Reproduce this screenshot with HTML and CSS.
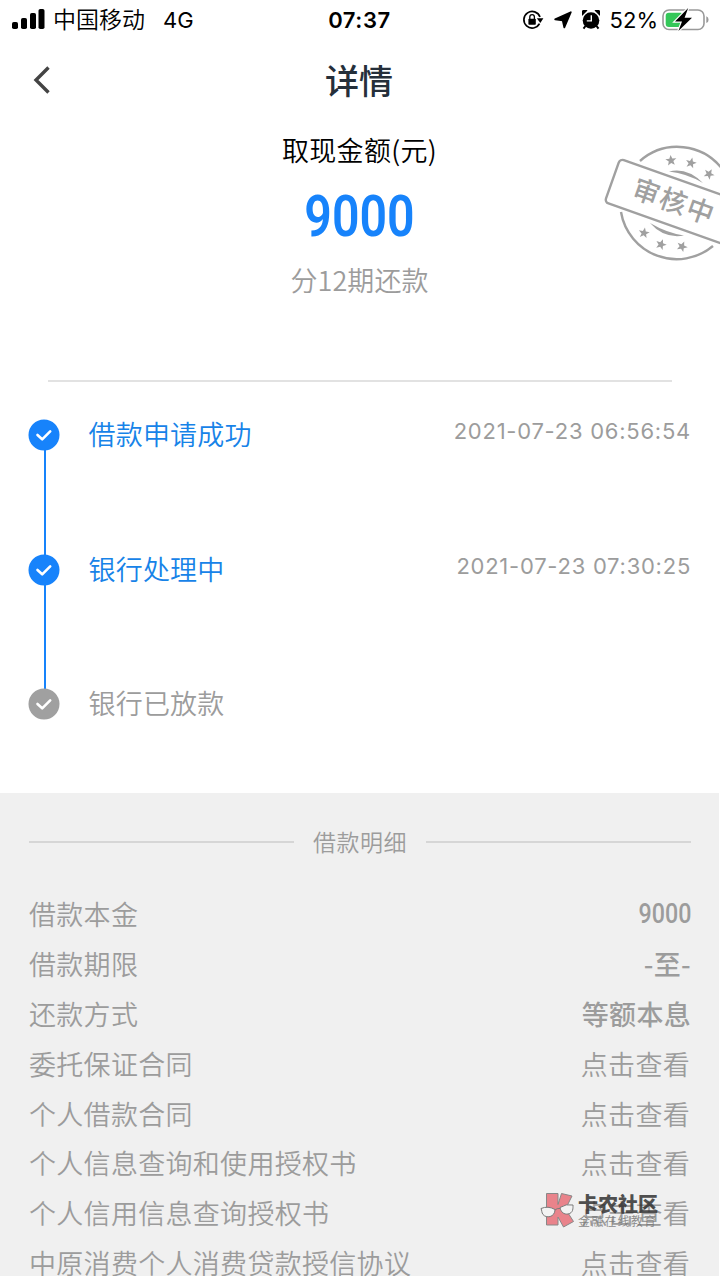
FILE: index.html
```html
<!DOCTYPE html>
<html lang="zh-CN">
<head>
    <meta charset="UTF-8">
    <meta name="viewport" content="width=device-width, initial-scale=1.0">
    <title>详情</title>
    <link rel="stylesheet" href="styles.css">
</head>
<body>
    <div class="status-bar">
        <div class="status-left">
            <svg class="signal" width="33" height="22" viewBox="0 0 33 22">
                <rect x="0" y="13" width="6" height="7" rx="1.8"/>
                <rect x="9" y="9" width="6" height="11" rx="1.8"/>
                <rect x="18" y="4" width="6" height="16" rx="1.8"/>
                <rect x="26.5" y="0" width="6" height="20" rx="1.8"/>
            </svg>
            <span class="carrier">中国移动</span>
            <span class="network">4G</span>
        </div>
        <div class="status-time">07:37</div>
        <div class="status-right">
            <svg class="lock" width="22" height="22" viewBox="0 0 22 22">
                <path d="M17.5 14.7A8.3 8.3 0 1 1 18 8" fill="none" stroke="#000" stroke-width="1.7"/>
                <path d="M14.8 9.3h6.6l-3.1 4.8z"/>
                <rect x="6.4" y="9.7" width="7.4" height="6" rx="0.8"/>
                <path d="M7.8 10V8a2.3 2.3 0 0 1 4.6 0v2" fill="none" stroke="#000" stroke-width="1.3"/>
            </svg>
            <svg class="location" width="18" height="18" viewBox="0 0 18 18">
                <path d="M16.8 1.2L10.3 16.3 8.700 9.300 1.200 8.300z" stroke="#000" stroke-width="1.8" stroke-linejoin="round"/>
            </svg>
            <svg class="alarm" width="18" height="20" viewBox="0 0 18 20">
                <circle cx="9" cy="10.5" r="8.3"/>
                <path d="M.3 5.8A3.3 3.3 0 0 1 5.5 .6zM17.7 5.8A3.3 3.3 0 0 0 12.5 .6z"/>
                <path d="M3.5 16l-2 2.6M14.5 16l2 2.6" stroke="#000" stroke-width="2"/>
                <path d="M9.3 5.3v5.6H4.8" fill="none" stroke="#fff" stroke-width="1.4"/>
            </svg>
            <span class="percent">52%</span>
            <svg class="battery" width="47" height="26" viewBox="0 0 47 26">
                <rect x="1" y="3" width="41" height="19.5" rx="6" fill="none" stroke="#999" stroke-width="1.6"/>
                <path d="M44.3 9.3q2.3 .8 2.3 3.4t-2.3 3.4z" fill="#999"/>
                <rect x="3.7" y="5.7" width="18" height="14.2" rx="3.2" fill="#34c759"/>
                <path d="M26.2 1L13 14.6h7L16.4 24 30 10.8h-7.4z" stroke="#fff" stroke-width="2.4" paint-order="stroke"/>
            </svg>
        </div>
    </div>

    <header class="nav">
        <svg class="back" width="18" height="28" viewBox="0 0 18 28">
            <path d="M15.5 1.5L3 14l12.5 12.5" fill="none" stroke="#444" stroke-width="3.4"/>
        </svg>
        <h1>详情</h1>
    </header>

    <section class="summary">
        <div class="summary-label">取现金额(元)</div>
        <div class="amount">9000</div>
        <div class="periods">分12期还款</div>
        <svg class="stamp" width="130" height="140" viewBox="0 0 130 140">
            <defs>
                <path id="star" d="M0-5.6L1.5-1.8 5.5-1.7 2.3.8 3.4 4.6 0 2.4-3.4 4.6-2.3.8-5.5-1.7-1.5-1.8z"/>
            </defs>
            <g fill="none" stroke="#a0a0a0" stroke-width="2.4">
                <path d="M50 31A56.5 56.5 0 0 1 133 40"/>
                <path d="M31 82A56.5 56.5 0 0 0 123 116"/>
                <rect x="-67.5" y="-23" width="150" height="46" rx="4" transform="translate(86 73) rotate(19.5)"/>
            </g>
            <g fill="#a0a0a0">
                <path d="M79 41.5Q97 37 113 53Q97 43.5 79 41.5z"/>
                <path d="M60 93Q74 109 94 105.5Q77 103 60 93z"/>
                <use href="#star" transform="translate(81 30.5) rotate(-5)"/>
                <use href="#star" transform="translate(101 33) rotate(14)"/>
                <use href="#star" transform="translate(119 44) rotate(30)"/>
                <use href="#star" transform="translate(54 103) rotate(10)"/>
                <use href="#star" transform="translate(71 114.5) rotate(20)"/>
                <use href="#star" transform="translate(92 116.5) rotate(24)"/>
                <text class="stamp-text" x="-46" y="9.5" transform="translate(87 73) rotate(19.5)">审核中</text>
            </g>
        </svg>
    </section>

    <ul class="steps">
        <li class="step done">
            <svg class="dot" width="32" height="32" viewBox="0 0 32 32">
                <circle cx="16" cy="16" r="15.5"/>
                <path d="M9.5 16l4.7 4.3 8-8"/>
            </svg>
            <span class="step-name">借款申请成功</span>
            <span class="step-time">2021-07-23 06:56:54</span>
        </li>
        <li class="step done">
            <svg class="dot" width="32" height="32" viewBox="0 0 32 32">
                <circle cx="16" cy="16" r="15.5"/>
                <path d="M9.5 16l4.7 4.3 8-8"/>
            </svg>
            <span class="step-name">银行处理中</span>
            <span class="step-time">2021-07-23 07:30:25</span>
        </li>
        <li class="step">
            <svg class="dot" width="32" height="32" viewBox="0 0 32 32">
                <circle cx="16" cy="16" r="15.5"/>
                <path d="M9.5 16l4.7 4.3 8-8"/>
            </svg>
            <span class="step-name">银行已放款</span>
        </li>
    </ul>

    <section class="details">
        <h2>借款明细</h2>
        <div class="row"><span>借款本金</span><span class="value number">9000</span></div>
        <div class="row"><span>借款期限</span><span class="value">-至-</span></div>
        <div class="row"><span>还款方式</span><span class="value">等额本息</span></div>
        <div class="row"><span>委托保证合同</span><span class="link">点击查看</span></div>
        <div class="row"><span>个人借款合同</span><span class="link">点击查看</span></div>
        <div class="row"><span>个人信息查询和使用授权书</span><span class="link">点击查看</span></div>
        <div class="row"><span>个人信用信息查询授权书</span><span class="link">点击查看</span></div>
        <div class="row"><span>中原消费个人消费贷款授信协议</span><span class="link">点击查看</span></div>
    </section>

    <div class="watermark">
        <svg width="36" height="36" viewBox="0 0 36 36">
            <path d="M6.5 1.500h11.5v11L21.500 1.500l10.500 2.500-6.500 13 8 12.500-10 5.500-5.500-10v8H6.500z" fill="#e8707a" stroke="#777"/>
            <g fill="#f4f4f4" stroke="#666">
                <path d="M1 16.500q7-3 14 1c0 8-9 9-12 5-1.500-2-1-4-2-6z"/>
                <path d="M20 15.500q6-4 13-2.500c0 3 .5 8-5 9-4 .5-7-1.500-8-6.500z"/>
                <path d="M15 18q2-2 5-1.500" fill="none"/>
            </g>
        </svg>
        <div class="watermark-text">
            <b>卡农社区</b>
            <span>金融在线教育</span>
        </div>
    </div>
</body>
</html>
```

FILE: styles.css
```css
* {
    box-sizing: border-box;
}
body {
    position: relative;
    width: 720px;
    height: 1280px;
    margin: 0;
    overflow: hidden;
    background-color: #fff;
    color: #9c9c9c;
    font-family: "Noto Sans CJK SC", sans-serif;
    font-size: 27px;
    font-weight: 350;
}

/* status bar */
.status-bar {
    display: grid;
    grid-template-columns: 1fr auto 1fr;
    align-items: center;
    height: 40px;
    padding: 0 11px 0 12px;
    color: #000;
    font-family: Inter, "Noto Sans CJK SC", sans-serif;
    font-size: 22px;
    font-weight: 400;
}
.status-left,
.status-right {
    display: flex;
    align-items: center;
}
.status-right {
    justify-content: flex-end;
}
.carrier {
    margin-left: 8px;
    font-size: 23px;
    font-weight: 350;
    line-height: 40px;
}
.network {
    margin-left: 18px;
}
.status-time {
    margin-left: -2px;
    font-weight: 600;
    letter-spacing: 0.6px;
}
.location {
    margin-left: 10px;
}
.alarm {
    margin-left: 10px;
}
.percent {
    margin-left: 10px;
}
.battery {
    margin-left: 4px;
}

/* title */
.nav {
    display: grid;
    grid-template-columns: 60px 1fr 60px;
    align-items: center;
    height: 80px;
}
.back {
    margin-left: 33px;
}
.nav h1 {
    margin: 0 1px 0 -1px;
    color: #252f3a;
    font-size: 34px;
    font-weight: 500;
    line-height: 80px;
    text-align: center;
}

/* amount */
.summary {
    position: relative;
    height: 262px;
    margin: 0 48px;
    padding-top: 10px;
    border-bottom: 2px solid #e2e2e2;
    text-align: center;
}
.summary-label {
    margin-left: -1px;
    color: #000;
    letter-spacing: 0.3px;
    line-height: 40px;
}
.amount {
    margin-top: 12px;
    margin-left: -1px;
    color: #1783fb;
    font-family: Roboto, sans-serif;
    font-size: 57.5px;
    font-weight: 600;
    line-height: 70px;
    transform: scaleX(0.84);
}
.periods {
    margin-top: 8px;
    margin-left: -1px;
    letter-spacing: 0.1px;
    line-height: 40px;
}
.stamp {
    position: absolute;
    top: 10px;
    right: -48px;
}
.stamp-text {
    font-size: 27px;
    font-weight: 500;
    letter-spacing: 1.5px;
}

/* progress */
.steps {
    height: 411px;
    margin: 0;
    padding: 37px 29px 0 28px;
    list-style: none;
}
.step {
    position: relative;
    display: flex;
    align-items: flex-start;
    height: 134.5px;
    line-height: 32px;
}
.step.done::after {
    content: "";
    position: absolute;
    top: 30px;
    left: 16px;
    width: 2px;
    height: 106px;
    background-color: #1783fb;
}
.dot {
    fill: #a0a0a0;
}
.done .dot {
    fill: #1783fb;
}
.dot path {
    fill: none;
    stroke: #fff;
    stroke-width: 2.6;
    stroke-linecap: round;
    stroke-linejoin: round;
}
.step-name {
    margin: -1px 0 0 28.5px;
    letter-spacing: 0.2px;
}
.done .step-name {
    color: #1783e8;
}
.step-time {
    margin: -4px 0 0 auto;
    font-family: Inter, sans-serif;
    font-size: 22px;
    font-weight: 400;
    letter-spacing: 0.75px;
}

/* details */
.details {
    height: 483px;
    margin-right: 1px;
    padding: 29px 28px 0 29px;
    overflow: hidden;
    background-color: #f0f0f0;
}
.details h2 {
    display: flex;
    align-items: center;
    gap: 19px;
    margin: 0 0 27px;
    font-size: 23px;
    font-weight: 350;
    letter-spacing: 0.5px;
    line-height: 39px;
}
.details h2::before,
.details h2::after {
    content: "";
    flex: 1;
    height: 2px;
    background-color: #d6d6d6;
}
.row {
    display: flex;
    justify-content: space-between;
    height: 49.9px;
    letter-spacing: 0.3px;
    line-height: 52px;
}
.value {
    font-weight: 500;
}
.link {
    margin-right: 1px;
}
.number {
    font-family: Roboto, sans-serif;
    letter-spacing: 0;
    transform: scaleX(0.86);
    transform-origin: right;
}

/* watermark */
.watermark {
    position: absolute;
    top: 1192px;
    left: 540px;
    display: flex;
    gap: 2px;
    opacity: 0.85;
}
.watermark-text {
    display: flex;
    flex-direction: column;
    color: #333;
}
.watermark-text b {
    font-size: 20px;
    font-weight: 900;
    line-height: 24px;
}
.watermark-text span {
    color: #777;
    font-size: 12px;
    letter-spacing: 1.2px;
    line-height: 10px;
}
```
